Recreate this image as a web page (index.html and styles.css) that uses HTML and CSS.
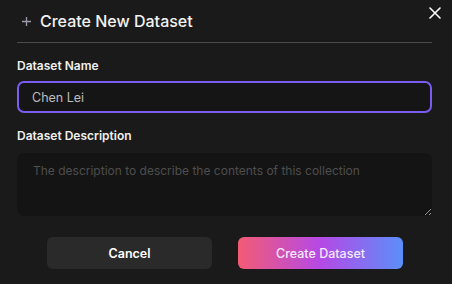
FILE: index.html
```html
<!DOCTYPE html>
<html lang="en">
<head>
  <meta charset="UTF-8" />
  <meta name="viewport" content="width=device-width, initial-scale=1" />
  <title>Create New Dataset</title>
  <link rel="stylesheet" href="styles.css">
</head>
<body>
  <div class="modal">
    <button class="close-btn" aria-label="Close">
      <svg width="12" height="12" viewBox="0 0 12 12"><path d="M1 1L11 11M11 1L1 11" stroke="#fff" stroke-width="1.6" stroke-linecap="round"/></svg>
    </button>

    <header class="modal-header">
      <svg class="plus" width="9" height="9" viewBox="0 0 9 9"><path d="M4.5 0V9M0 4.5H9" stroke="#9a9aa8" stroke-width="1.3"/></svg>
      <h2>Create New Dataset</h2>
    </header>

    <form class="dataset-form">
      <label for="name">Dataset Name</label>
      <input type="text" id="name" value="Chen Lei" />

      <label for="desc">Dataset Description</label>
      <textarea id="desc" placeholder="The description to describe the contents of this collection"></textarea>

      <div class="actions">
        <button type="button" class="cancel-btn">Cancel</button>
        <button type="submit" class="create-btn">Create Dataset</button>
      </div>
    </form>
  </div>
</body>
</html>
```

FILE: styles.css
```css
* {
  box-sizing: border-box;
}
body {
  margin: 0;
  background: #1a1a1a;
  font-family: Inter, "Noto Sans", sans-serif;
  color: #fff;
}
.modal {
  position: relative;
  width: 452px;
  height: 284px;
  padding: 0 20px 0 17px;
}
.close-btn {
  position: absolute;
  top: 7px;
  right: 11px;
  background: none;
  border: none;
  padding: 0;
  cursor: pointer;
  line-height: 0;
}
.modal-header {
  display: flex;
  align-items: center;
  gap: 9px;
  height: 43px;
  padding: 0 0 0 5px;
  border-bottom: 1.5px solid #4a4a4a;
}
.modal-header h2 {
  margin: 0 0 1px;
  font-size: 16px;
  font-weight: 500;
  color: #f2f2f2;
}
.dataset-form {
  display: flex;
  flex-direction: column;
}
.dataset-form label {
  font-size: 12px;
  font-weight: 600;
  color: #f0f0f0;
  margin-top: 15px;
  margin-bottom: 8px;
}
.dataset-form input {
  height: 32px;
  border: 2px solid #7a5cf0;
  border-radius: 7px;
  background: #151515;
  color: #bdbdbd;
  font-family: inherit;
  font-size: 12.5px;
  padding: 0 13px;
  outline: none;
}
.dataset-form textarea {
  height: 63px;
  margin-top: 2px;
  border: none;
  border-radius: 7px;
  background: #141414;
  color: #ddd;
  font-family: inherit;
  font-size: 12px;
  padding: 10px 16px;
  resize: vertical;
}
.dataset-form textarea::placeholder {
  color: #4e4e4e;
}
.actions {
  display: flex;
  justify-content: space-between;
  padding: 0 29px 0 30px;
  margin-top: 21px;
}
.actions button {
  width: 165px;
  height: 32px;
  border: none;
  border-radius: 6px;
  font-family: inherit;
  font-size: 12.5px;
  cursor: pointer;
}
.cancel-btn {
  background: #2a2a2a;
  color: #fff;
  font-weight: 600;
}
.create-btn {
  background: linear-gradient(90deg, #f35b74 0%, #b549e6 50%, #5b8ff9 100%);
  color: #f4eaff;
  font-weight: 500;
}
```
